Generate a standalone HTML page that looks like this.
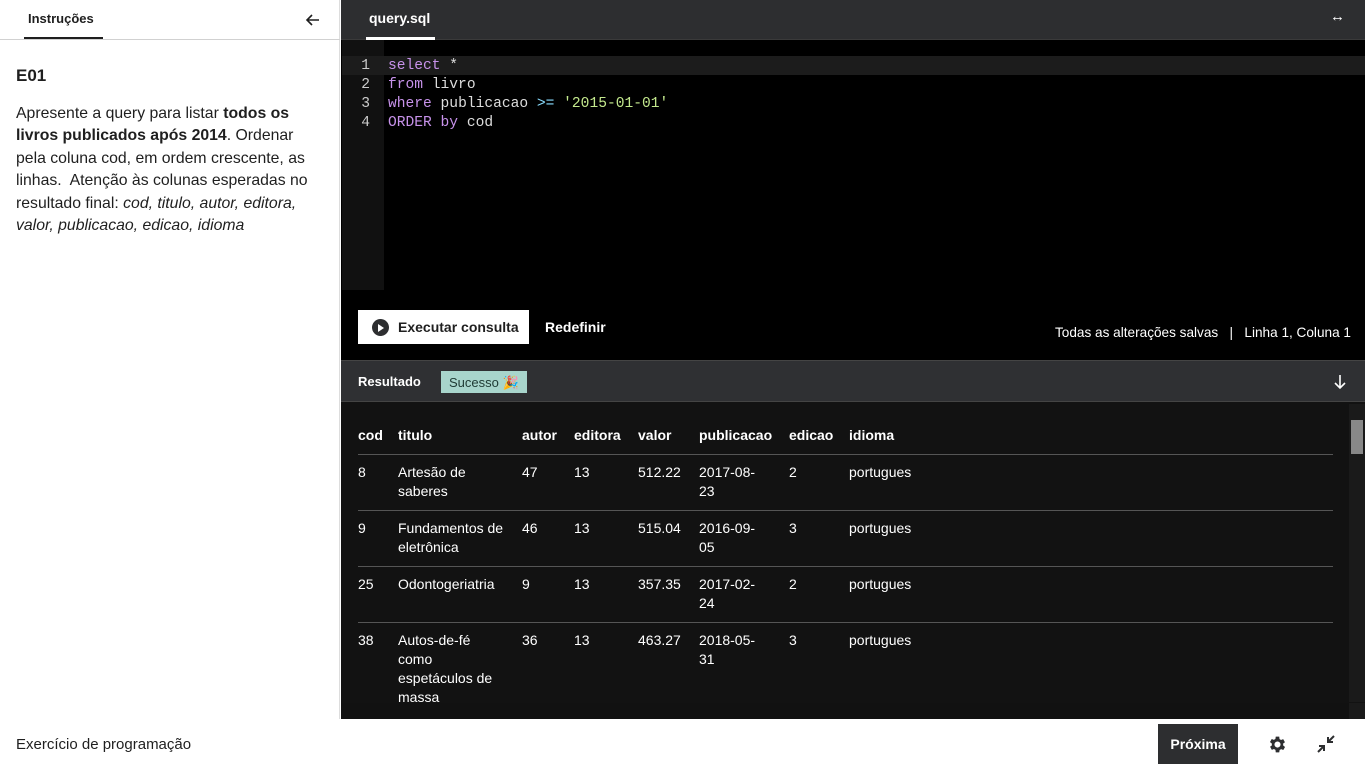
<!DOCTYPE html>
<html><head><meta charset="utf-8"><style>
*{margin:0;padding:0;box-sizing:border-box}
body{width:1365px;height:767px;overflow:hidden;font-family:"Liberation Sans",sans-serif;background:#fff;position:relative}
.a{position:absolute}
.mono{font-family:"Liberation Mono","DejaVu Sans Mono",monospace;font-size:14.6px;line-height:19px}
.t{color:#fff;font-size:14px;position:absolute;line-height:19px}
.b{font-weight:bold}
.hl{position:absolute;left:358px;width:975px;height:1px;background:#555}
</style></head><body>
<div class="a" style="left:0;top:0;width:340px;height:719px;background:#fff;border-right:1px solid #ddd"></div>
<div class="a b" style="left:28px;top:11px;font-size:13px;color:#1f1f1f">Instruções</div>
<div class="a" style="left:24px;top:37px;width:79px;height:3px;background:#1f1f1f"></div>
<div class="a" style="left:0;top:39px;width:340px;height:1px;background:#d1d1d1"></div>
<svg class="a" style="left:305px;top:12px" width="16" height="16" viewBox="0 0 16 16"><path d="M14 8H2M7 3L2 8l5 5" stroke="#1f1f1f" stroke-width="1.6" fill="none"/></svg>
<div class="a b" style="left:16px;top:66px;font-size:17px;color:#1f1f1f">E01</div>
<div class="a" style="left:16px;top:103px;width:300px;font-size:15.8px;line-height:22.4px;color:#1f1f1f">Apresente a query para listar <b>todos os livros publicados após 2014</b>. Ordenar pela coluna cod, em ordem crescente, as linhas.&nbsp; Atenção às colunas esperadas no resultado final: <i>cod, titulo, autor, editora, valor, publicacao, edicao, idioma</i></div>
<div class="a" style="left:341px;top:0;width:1024px;height:719px;background:#000"></div>
<div class="a" style="left:341px;top:0;width:1024px;height:40px;background:#2d2e30;border-bottom:1px solid #3a3a3a"></div>
<div class="a b" style="left:369px;top:10px;font-size:14px;color:#fff">query.sql</div>
<div class="a" style="left:366px;top:37px;width:69px;height:3px;background:#fff"></div>
<div class="a" style="left:1330px;top:8px;color:#fff;font-size:15px">↔</div>
<div class="a" style="left:342px;top:40px;width:42px;height:250px;background:#111"></div>
<div class="a" style="left:342px;top:56px;width:1023px;height:19px;background:#1c1c1c"></div>
<div class="a mono" style="left:342px;top:57px;width:28px;text-align:right;color:#ccc">1<br>2<br>3<br>4</div>
<div class="a mono" style="left:388px;top:57px;color:#ddd"><span style="color:#c792ea">select</span> *<br><span style="color:#c792ea">from</span> livro<br><span style="color:#c792ea">where</span> publicacao <span style="color:#89ddff">&gt;=</span> <span style="color:#c3e88d">'2015-01-01'</span><br><span style="color:#c792ea">ORDER by</span> cod</div>
<div class="a" style="left:358px;top:310px;width:171px;height:34px;background:#fff"></div>
<div class="a" style="left:372px;top:319px;width:17px;height:17px;border-radius:50%;background:#2d2e30"></div>
<div class="a" style="left:378px;top:323.5px;width:0;height:0;border-left:6px solid #fff;border-top:4px solid transparent;border-bottom:4px solid transparent"></div>
<div class="a b" style="left:398px;top:319px;font-size:14px;color:#1f1f1f">Executar consulta</div>
<div class="a b" style="left:545px;top:319px;font-size:14px;color:#fff">Redefinir</div>
<div class="a" style="left:1055px;top:325px;font-size:13.6px;color:#fff;white-space:pre">Todas as alterações salvas   |   Linha 1, Coluna 1</div>
<div class="a" style="left:341px;top:360px;width:1024px;height:42px;background:#2f3033;border-top:1px solid #444;border-bottom:1px solid #444"></div>
<div class="a b" style="left:358px;top:374px;font-size:13px;color:#fff">Resultado</div>
<div class="a" style="left:441px;top:371px;width:86px;height:22px;background:#a8d5cc;font-size:13px;color:#1f3a34;padding:4px 8px">Sucesso 🎉</div>
<svg class="a" style="left:1332px;top:374px" width="16" height="16" viewBox="0 0 16 16"><path d="M8 1v13M3 9l5 5 5-5" stroke="#fff" stroke-width="1.6" fill="none"/></svg>
<div class="a" style="left:341px;top:402px;width:1024px;height:317px;background:#121212"></div>
<div class="a" style="left:1349px;top:404px;width:16px;height:298px;background:#1a1a1a"></div>
<div class="a" style="left:1351px;top:420px;width:12px;height:34px;background:#888"></div>
<div class="t b" style="left:358px;top:426px">cod</div><div class="t b" style="left:398px;top:426px">titulo</div><div class="t b" style="left:522px;top:426px">autor</div><div class="t b" style="left:574px;top:426px">editora</div><div class="t b" style="left:638px;top:426px">valor</div><div class="t b" style="left:699px;top:426px">publicacao</div><div class="t b" style="left:789px;top:426px">edicao</div><div class="t b" style="left:849px;top:426px">idioma</div>
<div class="hl" style="top:454px"></div><div class="hl" style="top:510px"></div><div class="hl" style="top:566px"></div><div class="hl" style="top:622px"></div>
<div class="t" style="left:358px;top:463px">8</div><div class="t" style="left:398px;top:463px">Artesão de<br>saberes</div><div class="t" style="left:522px;top:463px">47</div><div class="t" style="left:574px;top:463px">13</div><div class="t" style="left:638px;top:463px">512.22</div><div class="t" style="left:699px;top:463px">2017-08-<br>23</div><div class="t" style="left:789px;top:463px">2</div><div class="t" style="left:849px;top:463px">portugues</div>
<div class="t" style="left:358px;top:519px">9</div><div class="t" style="left:398px;top:519px">Fundamentos de<br>eletrônica</div><div class="t" style="left:522px;top:519px">46</div><div class="t" style="left:574px;top:519px">13</div><div class="t" style="left:638px;top:519px">515.04</div><div class="t" style="left:699px;top:519px">2016-09-<br>05</div><div class="t" style="left:789px;top:519px">3</div><div class="t" style="left:849px;top:519px">portugues</div>
<div class="t" style="left:358px;top:575px">25</div><div class="t" style="left:398px;top:575px">Odontogeriatria</div><div class="t" style="left:522px;top:575px">9</div><div class="t" style="left:574px;top:575px">13</div><div class="t" style="left:638px;top:575px">357.35</div><div class="t" style="left:699px;top:575px">2017-02-<br>24</div><div class="t" style="left:789px;top:575px">2</div><div class="t" style="left:849px;top:575px">portugues</div>
<div class="a" style="left:341px;top:622px;width:1008px;height:81px;overflow:hidden">
<div class="t" style="left:17px;top:9px">38</div><div class="t" style="left:57px;top:9px">Autos-de-fé<br>como<br>espetáculos de<br>massa</div><div class="t" style="left:181px;top:9px">36</div><div class="t" style="left:233px;top:9px">13</div><div class="t" style="left:297px;top:9px">463.27</div><div class="t" style="left:358px;top:9px">2018-05-<br>31</div><div class="t" style="left:448px;top:9px">3</div><div class="t" style="left:508px;top:9px">portugues</div>
</div>
<div class="a" style="left:341px;top:703px;width:1008px;height:16px;background:#111"></div>
<div class="a" style="left:1349px;top:703px;width:16px;height:16px;background:#1a1a1a"></div>
<div class="a" style="left:0;top:719px;width:1365px;height:48px;background:#fff"></div>
<div class="a" style="left:16px;top:736px;font-size:15px;color:#1f1f1f">Exercício de programação</div>
<div class="a b" style="left:1158px;top:724px;width:80px;height:40px;background:#2d2e30;color:#fff;font-size:14px;text-align:center;line-height:40px">Próxima</div>
<svg class="a" style="left:1267px;top:734px" width="21" height="21" viewBox="0 0 24 24"><path fill="#2d2e30" d="M19.4 13a7.5 7.5 0 0 0 0-2l2.1-1.6-2-3.5-2.5 1a7 7 0 0 0-1.7-1L15 3h-4l-.4 2.7a7 7 0 0 0-1.7 1l-2.5-1-2 3.5L6.6 11a7.5 7.5 0 0 0 0 2l-2.1 1.6 2 3.5 2.5-1a7 7 0 0 0 1.7 1L11 21h4l.4-2.7a7 7 0 0 0 1.7-1l2.5 1 2-3.5zM13 15.5A3.5 3.5 0 1 1 13 8.5a3.5 3.5 0 0 1 0 7z" transform="translate(-1 0)"/></svg>
<svg class="a" style="left:1316px;top:734px" width="20" height="20" viewBox="0 0 20 20"><path d="M18 2l-6 6M12 3v5h5M2 18l6-6M3 12h5v5" stroke="#2d2e30" stroke-width="2" fill="none"/></svg>
</body></html>
